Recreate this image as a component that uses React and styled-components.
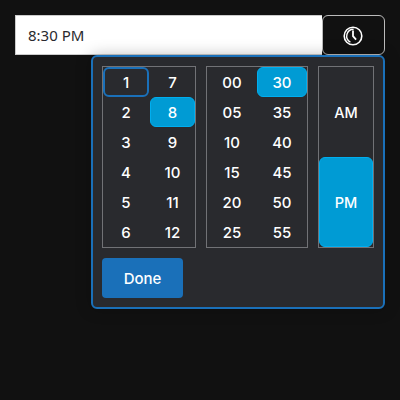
import React from "react";
import styled, { createGlobalStyle } from "styled-components";

const GlobalStyle = createGlobalStyle`
  * { box-sizing: border-box; }
  body { margin: 0; background: #111; }
  button, input { font: inherit; margin: 0; }
`;

const Page = styled.main`
  width: 400px;
  height: 400px;
  padding: 15px;
  background: #111;
  color: #fff;
  font-family: Inter, "Noto Sans", sans-serif;
  font-size: 15px;
  overflow: hidden;
`;

const Picker = styled.div`
  position: relative;
  width: 370px;
`;

const Field = styled.div`
  display: flex;
  height: 40px;
`;

const TimeInput = styled.input`
  width: 307px;
  height: 40px;
  padding: 0 12px 1px;
  border: 1px solid #ccc;
  border-right: 0;
  border-radius: 0;
  outline: 0;
  background: #fff;
  color: #292a2e;
  font-family: "Noto Sans", sans-serif;
`;

const Toggle = styled.button`
  display: flex;
  align-items: center;
  justify-content: center;
  width: 63px;
  height: 40px;
  padding: 2px 1px 0 0;
  border: 1px solid #bbb;
  border-radius: 6px;
  background: #111;
  color: #fff;
`;

const Popup = styled.div`
  position: absolute;
  top: 40px;
  right: 0;
  width: 294px;
  height: 254px;
  padding: 9px;
  border: 2px solid #1a70b9;
  border-radius: 6px;
  background: #292a2e;
  box-shadow: 0 0 15px rgba(0, 0, 0, 0.25);
`;

const Groups = styled.div`
  display: flex;
  gap: 10px;
`;

const Group = styled.div`
  display: grid;
  grid-auto-flow: column;
  grid-template-rows: repeat(${(p) => p.$rows}, 1fr);
  grid-template-columns: ${(p) => p.$columns};
  column-gap: ${(p) => p.$gap || 0}px;
  width: ${(p) => p.$width}px;
  height: 182px;
  border: 1px solid #717276;
`;

const Option = styled.button`
  display: flex;
  align-items: center;
  justify-content: center;
  min-width: 0;
  padding: 1px 0 0;
  border: ${(p) => (p.$focused ? "2px solid #1a70b9" : p.$selected ? "1px solid #00aeef" : "1px solid transparent")};
  border-radius: 6px;
  background: ${(p) => (p.$selected ? "#009bd4" : "transparent")};
  color: #fff;
  font-size: ${(p) => (p.$compact ? 14.5 : 15)}px;
  font-weight: 500;
  line-height: 21px;
`;

const Done = styled.button`
  display: block;
  width: 81px;
  height: 40px;
  margin-top: 10px;
  padding: 0;
  border: 0;
  border-radius: 4px;
  background: #1a70b9;
  color: #fff;
  font-weight: 500;
`;

const hours = ["1", "2", "3", "4", "5", "6", "7", "8", "9", "10", "11", "12"];
const minutes = ["00", "05", "10", "15", "20", "25", "30", "35", "40", "45", "50", "55"];

function ClockIcon() {
  return (
    <svg width="20" height="20" viewBox="0 0 20 20" fill="none" stroke="currentColor">
      <circle cx="10" cy="10" r="8.8" strokeWidth="1.6" />
      <path d="M10.6 3.2A6.9 6.9 0 0 0 7.4 16.2" strokeWidth="1.4" />
      <path d="M10 4.5V10.2L13.1 13.7" strokeWidth="1.8" />
    </svg>
  );
}

function Column({ items, width, rows, columns, gap, selected, focused, compact }) {
  return (
    <Group $width={width} $rows={rows} $columns={columns} $gap={gap}>
      {items.map((item) => (
        <Option
          key={item}
          $selected={item === selected}
          $focused={item === focused}
          $compact={compact}
        >
          {item}
        </Option>
      ))}
    </Group>
  );
}

export default function App() {
  return (
    <Page>
      <GlobalStyle />
      <Picker>
        <Field>
          <TimeInput defaultValue="8:30 PM" aria-label="Time" />
          <Toggle aria-label="Choose time"><ClockIcon /></Toggle>
        </Field>
        <Popup>
          <Groups>
            <Column items={hours} width={94} rows={6} columns="46px 45px" gap={1} selected="8" focused="1" />
            <Column items={minutes} width={102} rows={6} columns="1fr 1fr" selected="30" />
            <Column items={["AM", "PM"]} width={56} rows={2} columns="1fr" selected="PM" compact />
          </Groups>
          <Done>Done</Done>
        </Popup>
      </Picker>
    </Page>
  );
}
